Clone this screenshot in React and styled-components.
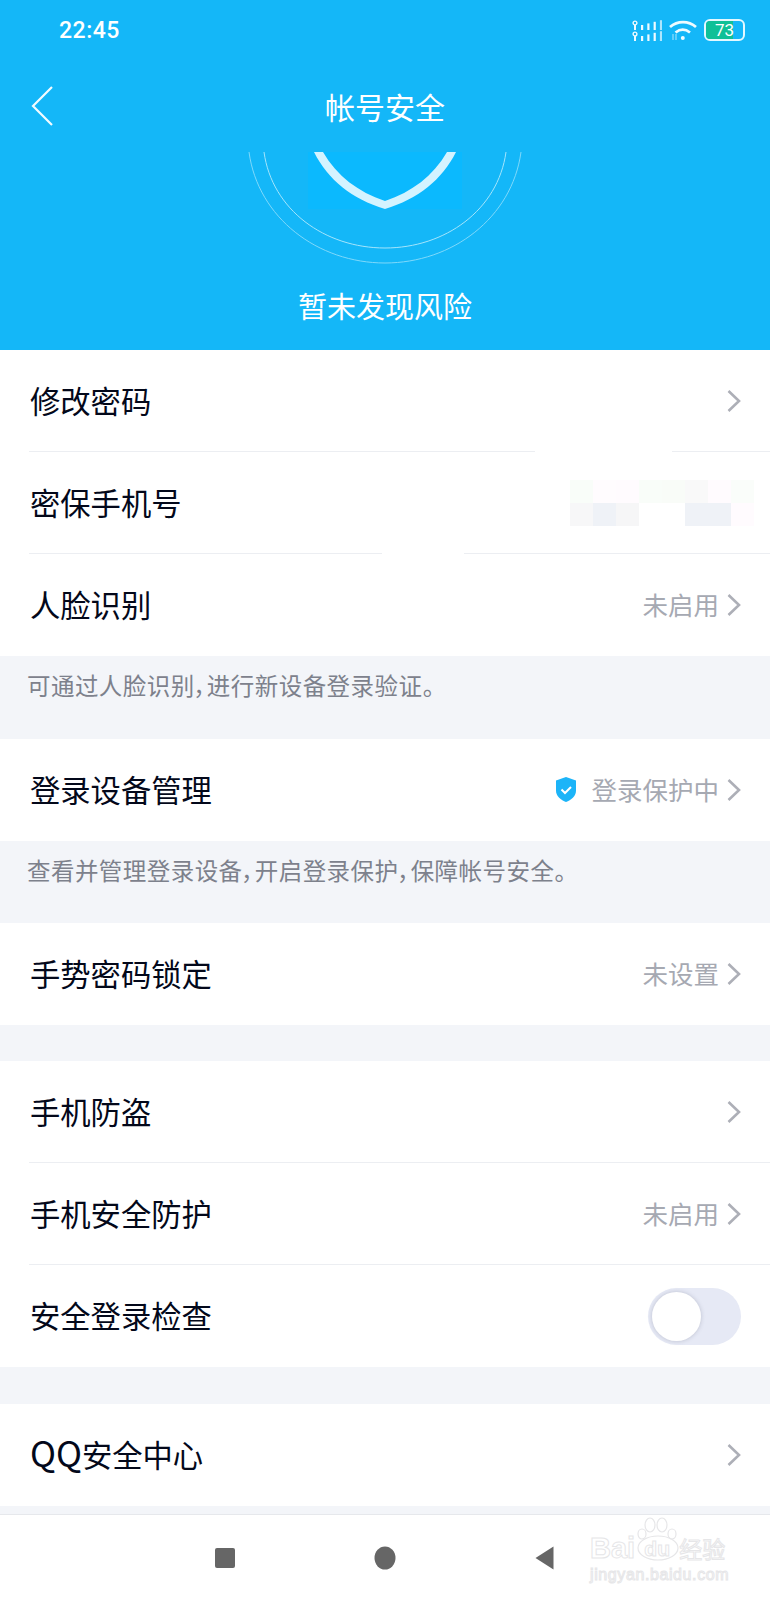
import React from 'react';
import styled, { createGlobalStyle } from 'styled-components';

const GlobalStyle = createGlobalStyle`
  html, body { margin: 0; padding: 0; background: #f3f5f9; }
  body { font-family: "Noto Sans CJK SC", "Noto Sans", sans-serif; }
`;

const Page = styled.div`
  width: 770px;
  height: 1600px;
  display: flex;
  flex-direction: column;
  overflow: hidden;
  background: #f3f5f9;
`;

const Header = styled.header`
  height: 350px;
  background: #14b7f8;
  color: #fff;
  display: flex;
  flex-direction: column;
  flex-shrink: 0;
`;

const StatusBar = styled.div`
  height: 60px;
  padding: 0 25px 0 59px;
  display: flex;
  align-items: center;
  justify-content: space-between;
`;

const Clock = styled.span`
  font-family: "Roboto", "Liberation Sans", sans-serif;
  font-size: 23px;
  font-weight: 500;
  letter-spacing: 0.5px;
`;

const StatusIcons = styled.div`
  display: flex;
  align-items: center;
  gap: 7px;
`;

const Battery = styled.div`
  position: relative;
  width: 41px;
  height: 22px;
  box-sizing: border-box;
  border: 2px solid #e3f8ff;
  border-radius: 6px;
  overflow: hidden;
  display: flex;
  align-items: center;
  justify-content: center;
  font-family: "Roboto", "Liberation Sans", sans-serif;
  font-size: 17px;
  line-height: 1;
  color: #fff;
  span { position: relative; }
  &::before {
    content: '';
    position: absolute;
    left: 0;
    top: 0;
    bottom: 0;
    width: 73%;
    background: #0fc097;
  }
`;

const NavBar = styled.div`
  height: 90px;
  box-sizing: border-box;
  padding-top: 2px;
  position: relative;
  display: flex;
  align-items: center;
  justify-content: center;
  font-size: 30px;
  line-height: 1;
  svg { position: absolute; left: 30px; top: 25px; }
`;

const Emblem = styled.div`
  height: 120px;
  display: flex;
  justify-content: center;
  flex-shrink: 0;
`;

const StatusText = styled.div`
  text-align: center;
  font-size: 29px;
  line-height: 40px;
  margin-top: 15px;
`;

const Group = styled.section`
  background: #fff;
  margin-bottom: ${p => p.$gap || 0}px;
  flex-shrink: 0;
`;

const Row = styled.div`
  height: 102px;
  box-sizing: border-box;
  padding: 0 29px 2px 30px;
  display: flex;
  align-items: center;
  justify-content: space-between;
  font-size: 30.3px;
  line-height: 44px;
  color: #03081a;
`;

const Latin = styled.span`
  font-size: 35px;
  line-height: 1;
`;

const Divider = styled.div`
  height: 1px;
  margin-left: 29px;
  background: #eceef2;
  position: relative;
  margin-top: -1px;
  &::after {
    content: '';
    display: ${p => (p.$patchWidth ? 'block' : 'none')};
    position: absolute;
    top: 0;
    height: 1px;
    left: ${p => p.$patchLeft - 29}px;
    width: ${p => p.$patchWidth}px;
    background: #fff;
  }
`;

const Value = styled.div`
  display: flex;
  align-items: center;
  gap: 8px;
  font-size: 25.5px;
  color: #a6a9b2;
`;

const ChevronMark = styled.svg`
  margin-top: 2px;
  flex-shrink: 0;
`;

const ShieldWrap = styled.span`
  display: flex;
  margin-right: 6px;
`;

const Note = styled.div`
  height: ${p => p.$h}px;
  box-sizing: border-box;
  padding: 13px 27px 0;
  font-size: 23.5px;
  line-height: 32px;
  color: #7d818c;
  font-feature-settings: "palt";
  letter-spacing: 0.45px;
  flex-shrink: 0;
`;

const Mosaic = styled.div`
  display: grid;
  grid-template-columns: repeat(8, 23px);
  grid-auto-rows: 23px;
  margin: 2px -13px 0 0;
`;

const Tile = styled.div`
  background: ${p => p.$c};
`;

const Toggle = styled.div`
  width: 93px;
  height: 57px;
  margin-top: 3px;
  border-radius: 29px;
  background: #e6e9f5;
  position: relative;
`;

const Knob = styled.div`
  position: absolute;
  left: 4px;
  top: 4px;
  width: 49px;
  height: 49px;
  border-radius: 50%;
  background: #fff;
  box-shadow: 0 0 4px rgba(90, 95, 120, 0.3);
`;

const SystemBar = styled.div`
  margin-top: auto;
  height: 86px;
  background: #fff;
  border-top: 1px solid #e6e8ec;
  position: relative;
  display: flex;
  align-items: center;
  padding-left: 215px;
  box-sizing: border-box;
  gap: 139px;
  flex-shrink: 0;
`;

const Watermark = styled.div`
  position: absolute;
  left: 590px;
  top: 2px;
  width: 137px;
  color: #fff;
  -webkit-text-stroke: 1px #e6e6e8;
  font-family: "Liberation Sans", sans-serif;
  line-height: 1;
`;

const MarkLine = styled.div`
  display: flex;
  align-items: center;
  height: 30px;
  margin-top: 16px;
  font-size: 29px;
  font-weight: 700;
`;

const MarkDu = styled.span`
  width: 44px;
  text-align: center;
  font-size: 21px;
`;

const MarkHan = styled.span`
  font-family: "Noto Sans CJK SC", sans-serif;
  font-size: 23px;
  font-weight: 400;
`;

const MarkUrl = styled.div`
  font-size: 16px;
  margin-top: 4px;
  letter-spacing: 0.6px;
`;

const Paw = styled.svg`
  position: absolute;
  left: 46px;
  top: 0;
`;

const Chevron = () => (
  <ChevronMark width="14" height="24" viewBox="0 0 14 24" fill="none">
    <path d="M1.500 2l10.500 10L1.500 22" stroke="#adafb7" strokeWidth="2.600" />
  </ChevronMark>
);

const mosaicColors = [
  '#f9fdf9', '#fffcfe', '#fffbfe', '#f9fdf9', '#f9fcf8', '#f9f9f9', '#fffbfe', '#fafdfa',
  '#f7f7f8', '#eff2f7', '#f6f6f7', '#fff', '#fff', '#eff2f7', '#eff2f7', '#fffbfe',
];

function SignalIcon() {
  const bars = [0, 1, 2, 3];
  return (
    <svg width="30" height="21" viewBox="0 0 30 21" fill="#eefaff">
      {[0, 11].map(y => (
        <g key={y}>
          <circle cx="3" cy={y + 3} r="1.900" fill="none" stroke="#eefaff" strokeWidth="1.400" />
          <rect x="2" y={y + 5} width="2" height="5" />
          {bars.map(b => (
            <rect key={b} x={9 + b * 6.300} y={y + 5 - b * 1.600} width="2.200" height={5 + b * 1.600} opacity={b === 3 ? 0.7 : 1} />
          ))}
        </g>
      ))}
    </svg>
  );
}

function WifiIcon() {
  return (
    <svg width="28" height="22" viewBox="0 0 28 22" fill="none" stroke="#eefbff" strokeWidth="2.800">
      <path d="M1 8c7.500-6.500 18.500-6.500 26 0" />
      <path d="M6.500 13.500c4.500-3.500 10-3.500 14.500 0" />
      <circle cx="13.800" cy="19" r="2" fill="#eefbff" stroke="none" />
      <path d="M4 15v6M7 15v6" strokeWidth="1" opacity="0.7" />
    </svg>
  );
}

function Shield() {
  return (
    <svg width="22" height="27" viewBox="0 0 22 27">
      <path d="M11 1l10 3.500v10c0 6-5 9.500-10 11.500C6 24 1 20.500 1 14.500v-10z" fill="#1cb4f8" />
      <path d="M6.500 13.500l3.500 3.500 6-6" fill="none" stroke="#fff" strokeWidth="2" />
    </svg>
  );
}

export default function App() {
  return (
    <Page>
      <GlobalStyle />
      <Header>
        <StatusBar>
          <Clock>22:45</Clock>
          <StatusIcons>
            <SignalIcon />
            <WifiIcon />
            <Battery><span>73</span></Battery>
          </StatusIcons>
        </StatusBar>
        <NavBar>
          <svg width="26" height="42" viewBox="0 0 26 42" fill="none">
            <path d="M22 2L3 21l19 19" stroke="#f2fbff" strokeWidth="2.200" />
          </svg>
          帐号安全
        </NavBar>
        <Emblem>
          <svg width="290" height="120" viewBox="240 150 290 120" fill="none">
            <rect x="308" y="152" width="154" height="57" fill="#0bb9fe" />
            <path d="M249 152c9 66 69 111 136 111s127-45 136-111" stroke="#7fd9fb" strokeWidth="1" />
            <path d="M264 152c8 58 61 96 121 96s113-38 121-96" stroke="#a4e5fc" strokeWidth="1" />
            <path d="M314 152c14 28 38 47 71 57 33-10 57-29 71-57h-9c-14 24-35 40-62 49-27-9-48-25-62-49z" fill="#d4f3ff" />
          </svg>
        </Emblem>
        <StatusText>暂未发现风险</StatusText>
      </Header>

      <Group>
        <Row>修改密码<Chevron /></Row>
        <Divider $patchLeft={535} $patchWidth={137} />
        <Row>
          密保手机号
          <Mosaic>
            {mosaicColors.map((c, i) => <Tile key={i} $c={c} />)}
          </Mosaic>
        </Row>
        <Divider $patchLeft={382} $patchWidth={82} />
        <Row>人脸识别<Value>未启用<Chevron /></Value></Row>
      </Group>
      <Note $h={83}>可通过人脸识别，进行新设备登录验证。</Note>

      <Group>
        <Row>
          登录设备管理
          <Value>
            <ShieldWrap><Shield /></ShieldWrap>
            登录保护中<Chevron />
          </Value>
        </Row>
      </Group>
      <Note $h={82}>查看并管理登录设备，开启登录保护，保障帐号安全。</Note>

      <Group $gap={36}>
        <Row>手势密码锁定<Value>未设置<Chevron /></Value></Row>
      </Group>

      <Group $gap={37}>
        <Row>手机防盗<Chevron /></Row>
        <Divider />
        <Row>手机安全防护<Value>未启用<Chevron /></Value></Row>
        <Divider />
        <Row>安全登录检查<Toggle><Knob /></Toggle></Row>
      </Group>

      <Group>
        <Row><span><Latin>QQ</Latin>安全中心</span><Chevron /></Row>
      </Group>

      <SystemBar>
        <svg width="20" height="20" viewBox="0 0 20 20"><rect width="20" height="20" rx="2" fill="#666" /></svg>
        <svg width="22" height="24" viewBox="0 0 22 24"><ellipse cx="11" cy="12" rx="10.500" ry="11.500" fill="#666" /></svg>
        <svg width="19" height="24" viewBox="0 0 19 24"><path d="M18.500 0.500v23L0.500 12z" fill="#666" /></svg>
        <Watermark>
          <Paw width="44" height="46" viewBox="0 0 44 46" fill="none" stroke="#e6e6e8" strokeWidth="1.200">
            <ellipse cx="14" cy="8" rx="5" ry="7" />
            <ellipse cx="26" cy="8" rx="5" ry="7" />
            <ellipse cx="6" cy="17" rx="4" ry="5" />
            <ellipse cx="36" cy="17" rx="4" ry="5" />
            <ellipse cx="22" cy="31" rx="20" ry="12" />
          </Paw>
          <MarkLine>Bai<MarkDu>du</MarkDu><MarkHan>经验</MarkHan></MarkLine>
          <MarkUrl>jingyan.baidu.com</MarkUrl>
        </Watermark>
      </SystemBar>
    </Page>
  );
}
